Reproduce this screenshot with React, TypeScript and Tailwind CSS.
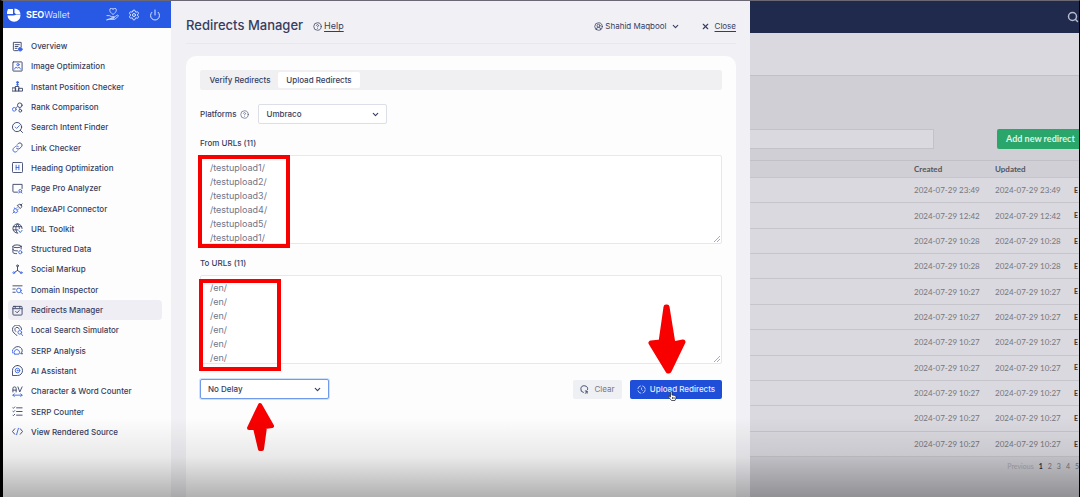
import type { ReactNode } from "react";
import { ChevronDown, CircleHelp, CircleUserRound, Power, Search, Settings, X } from "lucide-react";

const NAVY = "#3a4468";
const BLUE = "#3d68e8";

type NavItem = { label: string; icon: ReactNode };

const accent = { stroke: BLUE };

const navItems: NavItem[] = [
  {
    label: "Overview",
    icon: (
      <>
        <path d="M13 21H5a2 2 0 0 1-2-2V3h17v10" />
        <path d="M7 8h9M7 12h6M7 16h4" />
        <circle cx="18" cy="18" r="4" fill={BLUE} style={accent} />
      </>
    ),
  },
  {
    label: "Image Optimization",
    icon: (
      <>
        <rect x="2" y="2" width="20" height="20" rx="1" />
        <circle cx="13" cy="8" r="2.5" style={accent} />
        <path d="M5 18l4-5 3 3 3-3 4 5" style={accent} />
      </>
    ),
  },
  {
    label: "Instant Position Checker",
    icon: (
      <>
        <path d="M1 15h7v7H1zM8 12h7v10H8zM15 16h8v6h-8z" />
        <circle cx="12" cy="3" r="2" fill={BLUE} style={accent} />
        <path d="M12 5v5M10 8h4" style={accent} />
      </>
    ),
  },
  {
    label: "Rank Comparison",
    icon: (
      <>
        <circle cx="5" cy="16" r="4" style={accent} />
        <circle cx="17" cy="7" r="5" />
        <circle cx="18" cy="19" r="3" />
        <path d="M8 13l4-3M17 12v3" style={accent} />
      </>
    ),
  },
  {
    label: "Search Intent Finder",
    icon: (
      <>
        <circle cx="11" cy="11" r="10" />
        <path d="M18 18l5 5" />
        <path d="M7 11l3 3 6-6" style={accent} />
      </>
    ),
  },
  {
    label: "Link Checker",
    icon: (
      <>
        <path d="M10 14a5 5 0 0 0 7 0l4-4a5 5 0 0 0-7-7l-2 2" />
        <path d="M14 10a5 5 0 0 0-7 0l-4 4a5 5 0 0 0 7 7l2-2" style={accent} />
      </>
    ),
  },
  {
    label: "Heading Optimization",
    icon: (
      <>
        <rect x="1" y="1" width="22" height="22" rx="2" />
        <path d="M9 7v10M15 7v10M9 12h6" style={accent} />
      </>
    ),
  },
  {
    label: "Page Pro Analyzer",
    icon: (
      <>
        <path d="M12 20H4a2 2 0 0 1-2-2V3h20v9" />
        <circle cx="18" cy="17" r="3" style={accent} />
        <path d="M16 20l-1 2M20 20l2 2" style={accent} />
      </>
    ),
  },
  {
    label: "IndexAPI Connector",
    icon: (
      <>
        <path d="M12 6l6 6 2-2a4 4 0 0 0-6-6zM19 5l3-3" />
        <path d="M6 11l7 7-2 2a4 4 0 0 1-6-7zM5 19l-3 3M9 12l2-2M12 15l2-2" style={accent} />
      </>
    ),
  },
  {
    label: "URL Toolkit",
    icon: (
      <>
        <path d="M22 12a10 10 0 1 0-10 10M3 8h18M3 15h10M12 2c-5 5-5 15 0 20M12 2c3 3 4 6 4 10" />
        <path d="M15 17l3 4 4-5" style={accent} />
      </>
    ),
  },
  {
    label: "Structured Data",
    icon: (
      <>
        <ellipse cx="11" cy="5" rx="9" ry="3" />
        <path d="M2 5v13c0 2 3 3 8 3M20 5v6M2 12c0 2 4 3 10 3" />
        <circle cx="18" cy="18" r="3.5" style={accent} />
      </>
    ),
  },
  {
    label: "Social Markup",
    icon: (
      <>
        <circle cx="12" cy="4" r="2" />
        <path d="M12 6v8M12 14l-6 4M12 14l6 4" />
        <circle cx="4" cy="19" r="2" style={accent} />
        <circle cx="20" cy="19" r="2" style={accent} />
      </>
    ),
  },
  {
    label: "Domain Inspector",
    icon: (
      <>
        <path d="M2 4h20M2 11h5M2 18h5" />
        <circle cx="15" cy="14" r="5" style={accent} />
        <path d="M19 18l4 3" style={accent} />
      </>
    ),
  },
  {
    label: "Redirects Manager",
    icon: (
      <>
        <rect x="2" y="3" width="20" height="19" rx="2" />
        <path d="M2 8h20M7 3v3M17 3v3" />
        <path d="M8 14l3 3 5-5" />
      </>
    ),
  },
  {
    label: "Local Search Simulator",
    icon: (
      <>
        <path d="M11 23c-4-3-10-7-10-13a10 10 0 0 1 20 0" />
        <path d="M8 14a5 5 0 1 1 8-5" />
        <circle cx="17" cy="16" r="4" style={accent} />
        <path d="M20 19l3 4" style={accent} />
      </>
    ),
  },
  {
    label: "SERP Analysis",
    icon: (
      <>
        <path d="M3 9a10 9 0 1 1 16 10h4" />
        <path d="M6 20a6 6 0 1 1 9 0H6" style={accent} />
        <path d="M2 18a8 8 0 0 1-1-7" style={accent} />
      </>
    ),
  },
  {
    label: "AI Assistant",
    icon: (
      <>
        <path d="M12 1a11 11 0 1 1 0 22H1V12A11 11 0 0 1 12 1z" />
        <circle cx="12" cy="12" r="5" style={accent} />
        <circle cx="12" cy="12" r="1" style={accent} />
      </>
    ),
  },
  {
    label: "Character & Word Counter",
    icon: (
      <>
        <path d="M2 13V5q0-3 3.500-3T9 5v8M2 9h7M13 2l4 11 5-11" />
        <path d="M2 20h20M5 17l-3 3 3 3M19 17l3 3-3 3" style={accent} />
      </>
    ),
  },
  {
    label: "SERP Counter",
    icon: (
      <>
        <path d="M10 4h12M10 12h12M10 20h12" />
        <path d="M2 4l1 1 3-3M2 12l1 1 3-3M2 20l1 1 3-3" />
      </>
    ),
  },
  {
    label: "View Rendered Source",
    icon: (
      <>
        <path d="M6 6l-5 6 5 6M18 6l5 6-5 6" />
        <path d="M14 5l-4 14" style={accent} />
      </>
    ),
  },
];

const fromUrls = [1, 2, 3, 4, 5, 1, 2, 3, 4, 5, 1].map((n) => `/testupload${n}/`);
const toUrls = fromUrls.map(() => "/en/");

const redirectDates = [
  "2024-07-29 23:49",
  "2024-07-29 12:42",
  "2024-07-29 10:28",
  "2024-07-29 10:28",
  "2024-07-29 10:27",
  "2024-07-29 10:27",
  "2024-07-29 10:27",
  "2024-07-29 10:27",
  "2024-07-29 10:27",
  "2024-07-29 10:27",
  "2024-07-29 10:27",
];

export default function App() {
  return (
    <div className="relative flex min-h-screen overflow-hidden border-t border-r border-l-[3px] border-t-[#6b6874] border-r-black border-l-black bg-[#f1f0f4] font-['Inter',sans-serif] text-[8px] text-[#363d60]">
      <div className="flex w-[747px] shrink-0">
        <Sidebar />
        <main className="flex min-w-0 flex-1 flex-col pr-[14px] pl-[15px]">
          <PageHeader />
          <UploadCard />
        </main>
      </div>
      <RedirectList />
      <div className="pointer-events-none absolute inset-x-0 bottom-0 h-20 bg-linear-to-b from-transparent via-black/8 to-black/30" />
    </div>
  );
}

const Sidebar = () => (
  <aside className="w-[168px] shrink-0 bg-[#fdfdfe]">
    <div className="flex h-[27px] items-center bg-[#2759e4] pr-[10px] pl-1 text-white">
      <svg viewBox="0 0 28 28" className="size-[14px]" fill="currentColor" aria-hidden="true">
        <path d="M2 2h10v10H0V8z" />
        <path d="M15 1a12 12 0 0 1 12 12h-9l-3-4z" />
        <path d="M1 15h12l4-1h10a13 13 0 0 1-26 1z" />
      </svg>
      <span className="ml-[5px] text-[9px]">
        <b>SEO</b>
        <span className="font-light">Wallet</span>
      </span>
      <div className="ml-auto flex items-center gap-[9px] text-[#dbe5ff]">
        <button type="button" aria-label="Support us">
          <svg
            viewBox="0 0 24 24"
            className="size-[13px]"
            fill="none"
            stroke="currentColor"
            strokeWidth="1.5"
            strokeLinejoin="round"
            aria-hidden="true"
          >
            <path d="M13 12C9 9 7 7 7 4a3 3 0 0 1 6-1 3 3 0 0 1 6 1c0 3-2 5-6 8z" />
            <path d="M1 14h5l4 2h5v3H9M15 17l6-4q2 0 2 2l-7 6H6l-5 1z" />
          </svg>
        </button>
        <button type="button" aria-label="Settings">
          <Settings size={12} strokeWidth={2} />
        </button>
        <button type="button" aria-label="Log out">
          <Power size={12} strokeWidth={2} />
        </button>
      </div>
    </div>
    <nav className="mt-2 grid h-[406px] pr-[9px] pl-[5px]">
      {navItems.map(({ label, icon }) => (
        <a
          key={label}
          href="#"
          className={`flex items-center gap-2 rounded-sm pl-1 font-medium ${
            label === "Redirects Manager" ? "bg-[#efeef4]" : ""
          }`}
        >
          <svg
            viewBox="0 0 24 24"
            className="size-[11px]"
            fill="none"
            stroke={NAVY}
            strokeWidth="2"
            strokeLinecap="round"
            strokeLinejoin="round"
            aria-hidden="true"
          >
            {icon}
          </svg>
          {label}
        </a>
      ))}
    </nav>
  </aside>
);

const PageHeader = () => (
  <header className="flex h-[43px] items-center border-b border-[#e8e8f0] pt-2">
    <h1 className="text-[13px] font-medium">Redirects Manager</h1>
    <a href="#" className="ml-[10px] flex items-center gap-[2px] text-[9px]">
      <CircleHelp size={9} />
      <span className="underline underline-offset-2">Help</span>
    </a>
    <button type="button" className="ml-auto flex items-center gap-[2px]">
      <CircleUserRound size={9} />
      Shahid Maqbool
      <ChevronDown size={9} strokeWidth={3} className="ml-[2px]" />
    </button>
    <a href="#" className="ml-[21px] flex items-center gap-[5px]">
      <X size={9} strokeWidth={3} />
      <span className="underline underline-offset-2">Close</span>
    </a>
  </header>
);

const UploadCard = () => (
  <section className="mt-3 flex-1 rounded-t-[10px] bg-[#fdfdfe] p-[14px]">
    <div role="tablist" className="flex h-5 items-center rounded-xs bg-[#f0f0f3] p-[2px] font-medium">
      <button type="button" role="tab" aria-selected="false" className="h-4 w-[76px]">
        Verify Redirects
      </button>
      <button type="button" role="tab" aria-selected="true" className="h-4 w-[82px] rounded-xs bg-white">
        Upload Redirects
      </button>
    </div>

    <div className="mt-[14px] flex items-center">
      <label htmlFor="platform" className="font-medium">
        Platforms
      </label>
      <CircleHelp size={9} strokeWidth={1.5} className="mr-[9px] ml-1" />
      <Select id="platform" value="Umbraco" className="border-[#dcdee8]" />
    </div>

    <UrlField id="from-urls" label="From URLs (11)" urls={fromUrls}>
      <div className="pointer-events-none absolute top-0 -left-[2px] h-[93px] w-[92px] border-4 border-[#f80000]" />
    </UrlField>
    <UrlField id="to-urls" label="To URLs (11)" urls={toUrls}>
      <div className="pointer-events-none absolute top-1 -left-[1px] h-[92px] w-[82px] border-4 border-[#f80000]" />
    </UrlField>

    <div className="mt-[15px] flex items-center justify-between">
      <div className="relative">
        <Select
          id="delay"
          value="No Delay"
          label="Delay"
          className="border-[#6f9bea] ring-1 ring-[#cfe0fb]"
        />
        <svg
          viewBox="0 0 28 50"
          className="pointer-events-none absolute top-[23px] left-[46px] h-[50px] w-[28px]"
          fill="#f80000"
          stroke="#f80000"
          strokeWidth="4"
          strokeLinejoin="round"
          aria-hidden="true"
        >
          <path d="M14 3L26 24L19 25L16 47H14L9 26L3 26z" />
        </svg>
      </div>
      <div className="flex gap-2">
        <button
          type="button"
          className="flex h-[19px] w-[49px] items-center justify-center gap-[5px] rounded-xs bg-[#eff0f4] text-[#71778d]"
        >
          <svg viewBox="0 0 24 24" className="size-[9px]" fill="none" stroke={NAVY} strokeWidth="2.5" aria-hidden="true">
            <path d="M10 20A9 9 0 1 1 20 13M13 16h6M19 16v7M14 23l5-7" />
          </svg>
          Clear
        </button>
        <div className="relative">
          <button
            type="button"
            className="flex h-[19px] w-[92px] items-center justify-center gap-1 rounded-xs bg-[#1f4fd8] font-medium text-[#e4ebff]"
          >
            <svg viewBox="0 0 24 24" className="size-[9px]" fill="none" stroke="currentColor" strokeWidth="2" aria-hidden="true">
              <circle cx="12" cy="12" r="10" strokeDasharray="12 4" />
              <path d="M12 7v5l3 3" />
            </svg>
            Upload Redirects
          </button>
          <svg
            viewBox="0 0 38 70"
            className="pointer-events-none absolute -top-[76px] left-[18px] h-[70px] w-[38px]"
            fill="#f80000"
            stroke="#f80000"
            strokeWidth="5"
            strokeLinejoin="round"
            aria-hidden="true"
          >
            <path d="M18 3H19L25 40L35 38L21 67H20L3 39L13 38z" />
          </svg>
          <svg
            viewBox="0 0 18 20"
            className="pointer-events-none absolute top-[11px] left-[38px] h-[10px] w-[9px]"
            fill="white"
            stroke="#23262f"
            strokeWidth="1.5"
            strokeLinejoin="round"
            aria-hidden="true"
          >
            <path d="M5 12L5 3q0-2 1.500-2T8 3v5l6 1q3 1 2 5l-2 5H7L1 12q-1-2 1-2z" />
            <path d="M9 12v4M12 12v4" />
          </svg>
        </div>
      </div>
    </div>
  </section>
);

const Select = ({
  id,
  value,
  label,
  className,
}: {
  id: string;
  value: string;
  label?: string;
  className: string;
}) => (
  <div className="relative w-[129px]">
    <select
      id={id}
      aria-label={label}
      className={`block h-5 w-full appearance-none rounded-xs border bg-white px-[7px] font-medium ${className}`}
    >
      <option>{value}</option>
    </select>
    <ChevronDown size={9} strokeWidth={3} className="pointer-events-none absolute top-[6px] right-[7px]" />
  </div>
);

const UrlField = ({
  id,
  label,
  urls,
  children,
}: {
  id: string;
  label: string;
  urls: string[];
  children: ReactNode;
}) => (
  <div className="mt-[13px]">
    <label htmlFor={id} className="block leading-3 font-medium">
      {label}
    </label>
    <div className="relative mt-[6px]">
      <textarea
        id={id}
        defaultValue={urls.join("\n")}
        className="block h-[89px] w-full resize-none overflow-hidden rounded-xs border border-[#e6e7ef] bg-white px-[9px] py-[5px] text-[9px] leading-[14px] text-[#70758a]"
      />
      <svg
        viewBox="0 0 6 6"
        className="pointer-events-none absolute right-[2px] bottom-[2px] size-[6px]"
        stroke="#a9abb6"
        aria-hidden="true"
      >
        <path d="M0 6L6 0M3 6L6 3" />
      </svg>
      {children}
    </div>
  </div>
);

const RedirectList = () => (
  <section className="flex min-w-0 flex-1 flex-col overflow-hidden bg-[#d0cfd5] font-['Lato',sans-serif] text-[#77767d]">
    <div className="flex h-8 shrink-0 items-center justify-end bg-[#1f2a4c] text-[#b6bbce]">
      <button type="button" aria-label="Search">
        <Search size={12} strokeWidth={3} />
      </button>
    </div>
    <div className="h-[43px] shrink-0 border-b border-[#c1c0c7] bg-[#dad9df]" />
    <div className="mt-[53px] flex shrink-0 items-center">
      <input
        type="text"
        aria-label="Search redirects"
        className="h-5 min-w-0 flex-1 border border-l-0 border-[#c3c2c9] bg-[#dad9df] px-2 text-[9px]"
      />
      <button
        type="button"
        className="ml-[63px] h-5 w-[82px] shrink-0 rounded-l-xs bg-[#2ba66b] pl-[9px] text-left text-[9px] font-bold whitespace-nowrap text-[#dff3e8]"
      >
        Add new redirect
      </button>
    </div>
    <table className="mt-[11px] h-[297px] w-full table-fixed border-t border-[#c1c0c7] text-left text-[8px]">
      <thead>
        <tr className="h-[17px] text-[#55545c]">
          <th />
          <th className="w-[81px] font-bold">Created</th>
          <th className="w-[79px] font-bold">Updated</th>
          <th className="w-[5px]" />
        </tr>
      </thead>
      <tbody>
        {redirectDates.map((date, i) => (
          <tr key={i} className="border-y border-[#c6c5cc] bg-[#dad9df]">
            <td />
            <td className="whitespace-nowrap">{date}</td>
            <td className="whitespace-nowrap">{date}</td>
            <td className="text-[7px] font-bold text-[#3c3b42]">E</td>
          </tr>
        ))}
      </tbody>
    </table>
    <div className="mt-1 flex justify-end gap-[5px] text-[7px]">
      <span className="text-[#aaa9b1]">Previous</span>
      <b className="text-[#2c2b33]">1</b>
      <a href="#">2</a>
      <a href="#">3</a>
      <a href="#">4</a>
      <a href="#">5</a>
    </div>
  </section>
);
